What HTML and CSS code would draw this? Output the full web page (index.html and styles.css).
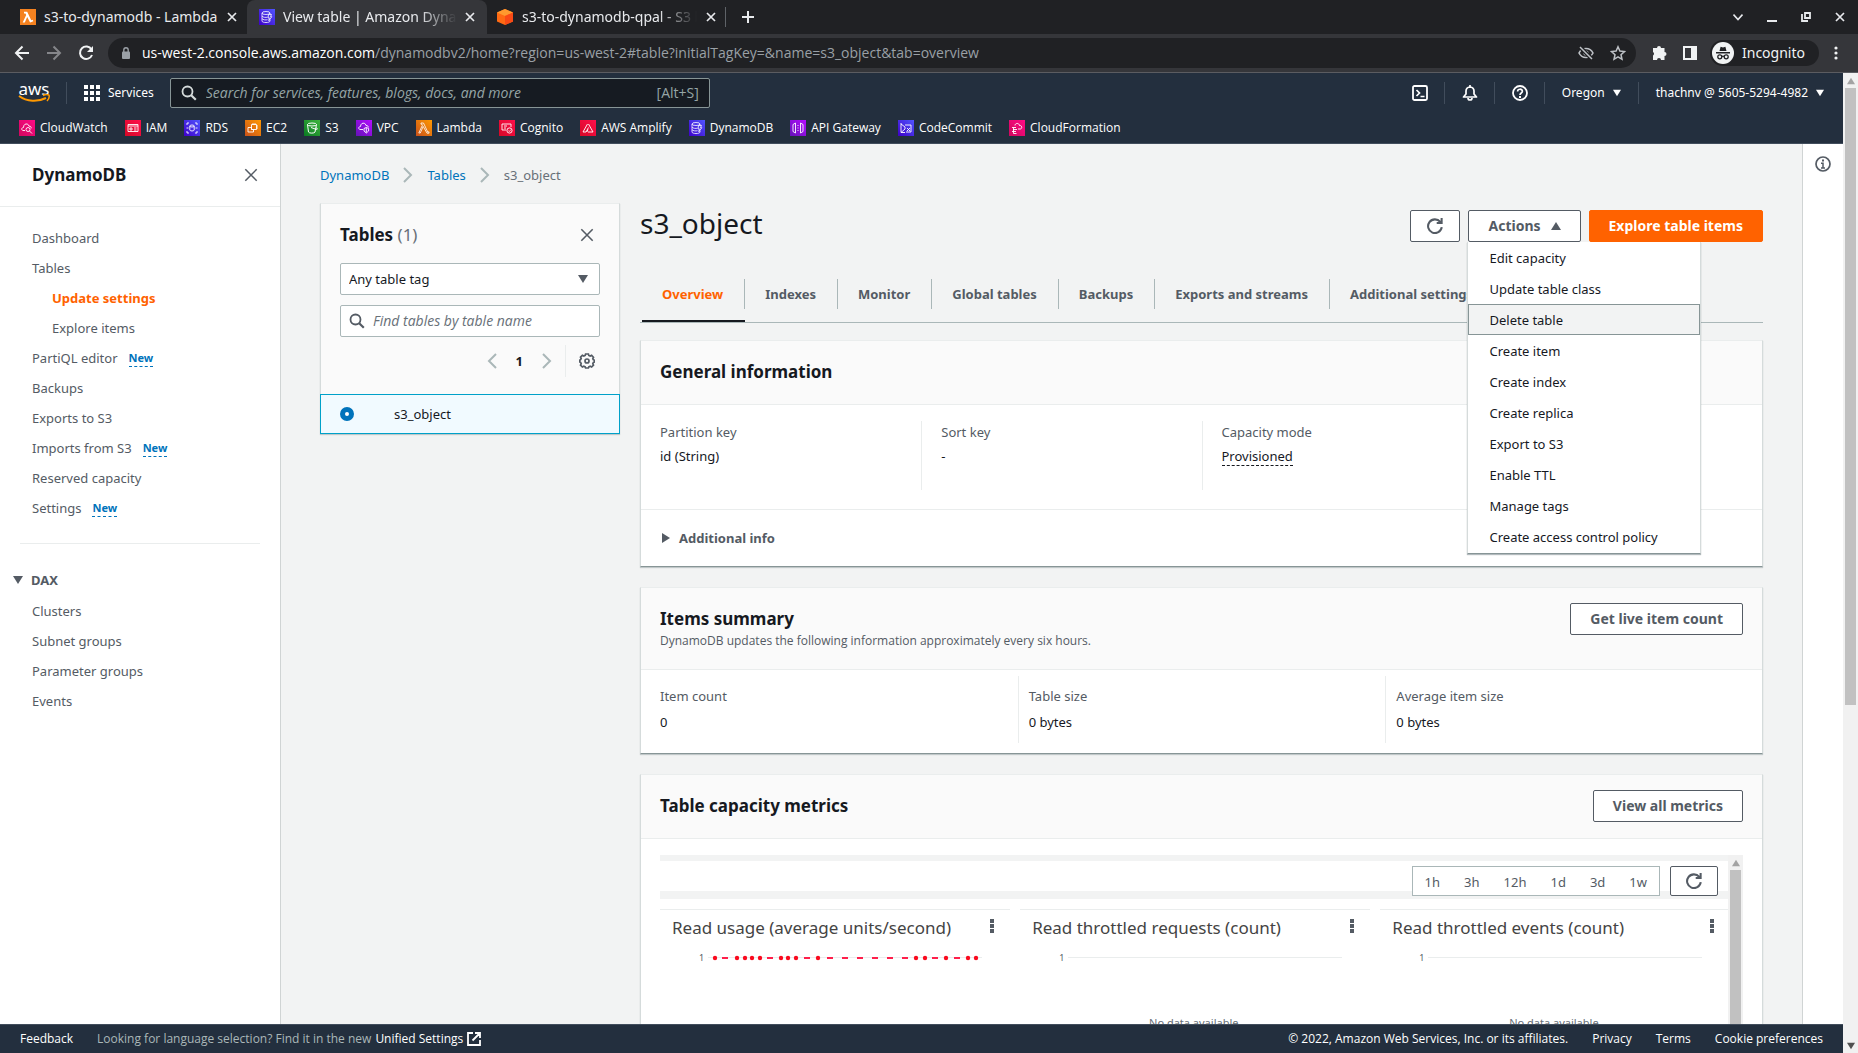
FILE: index.html
```html
<!DOCTYPE html>
<html lang="en">
<head>
<meta charset="utf-8">
<title>View table | Amazon DynamoDB</title>
<link rel="stylesheet" href="styles.css">
</head>
<body>
<svg class="defs" aria-hidden="true">
  <defs>
    <linearGradient id="g-orange" x1="0" y1="1" x2="1" y2="0"><stop offset="0" stop-color="#c8511b"/><stop offset="1" stop-color="#ff9900"/></linearGradient>
    <linearGradient id="g-pink" x1="0" y1="1" x2="1" y2="0"><stop offset="0" stop-color="#d0085d"/><stop offset="1" stop-color="#ff0a86"/></linearGradient>
    <linearGradient id="g-red" x1="0" y1="1" x2="1" y2="0"><stop offset="0" stop-color="#d50826"/><stop offset="1" stop-color="#ff0f4b"/></linearGradient>
    <linearGradient id="g-blue" x1="0" y1="1" x2="1" y2="0"><stop offset="0" stop-color="#3e00c8"/><stop offset="1" stop-color="#5055ff"/></linearGradient>
    <linearGradient id="g-green" x1="0" y1="1" x2="1" y2="0"><stop offset="0" stop-color="#0a7a22"/><stop offset="1" stop-color="#3fb53f"/></linearGradient>
    <linearGradient id="g-purple" x1="0" y1="1" x2="1" y2="0"><stop offset="0" stop-color="#6412b8"/><stop offset="1" stop-color="#b50dff"/></linearGradient>
    <symbol id="i-lambda" viewBox="0 0 16 16"><rect width="16" height="16" fill="url(#g-orange)"/><path d="M5 3h2.500l4.300 9.200 1.200-.4v1.400h-2L7.200 6.400 4.300 13H2.800l3.600-7.800-.5-1H5z" fill="none" stroke="#fff" stroke-width=".8"/></symbol>
    <symbol id="i-dynamo" viewBox="0 0 16 16"><rect width="16" height="16" fill="url(#g-blue)"/><g fill="none" stroke="#fff" stroke-width=".8"><ellipse cx="7" cy="4" rx="4" ry="1.500"/><path d="M3 4v8c0 2 8 2 8 0v-1.500M3 7c.5 1.400 4 1.700 5.500 1.200M3 9.500c.5 1.400 4 1.700 5.500 1.200M11 4v1"/><path d="m9.500 5.500h3l-1 2.200h1.300l-3 4 .6-2.800H9z"/></g></symbol>
    <symbol id="i-refresh" viewBox="1 1 14 14"><path d="M12.600 4.400A6 6 0 1 0 13.900 9M13.800 1v4.400H9.500" fill="none" stroke="currentColor" stroke-width="1.800"/></symbol>
    <symbol id="i-close" viewBox="0 0 16 16"><path d="m1.500 1.500 13 13M14.500 1.500l-13 13" fill="none" stroke="currentColor" stroke-width="1.800"/></symbol>
    <symbol id="i-x" viewBox="0 0 10 10"><path d="m1 1 8 8m0-8-8 8" fill="none" stroke="currentColor" stroke-width="1.700"/></symbol>
    <symbol id="i-search" viewBox="0 0 16 16"><path d="m10.200 10.200 4.600 4.600" stroke="currentColor" stroke-width="2.200"/><circle cx="6.500" cy="6.500" r="5" fill="none" stroke="currentColor" stroke-width="1.800"/></symbol>
    <symbol id="i-down" viewBox="0 0 10 10"><path d="M0 1h10L5 9z" fill="currentColor"/></symbol>
    <symbol id="i-up" viewBox="0 0 10 10"><path d="M0 9h10L5 1z" fill="currentColor"/></symbol>
    <symbol id="i-right" viewBox="0 0 10 16"><path d="m1 1 7 7-7 7" fill="none" stroke="currentColor" stroke-width="2"/></symbol>
    <symbol id="i-left" viewBox="0 0 10 16"><path d="M9 1 2 8l7 7" fill="none" stroke="currentColor" stroke-width="2"/></symbol>
    <symbol id="i-kebab" viewBox="0 0 4 14"><path d="M0 0h4v4H0zM0 5h4v4H0zM0 10h4v4H0z" fill="currentColor"/></symbol>
  </defs>
</svg>

<div class="browser">
  <div class="tabstrip">
    <div class="tab">
      <svg class="ic16" viewBox="0 0 16 16"><rect width="16" height="16" fill="#f58220"/><path d="M4 2.800h3.200l4 8.400 1.500-.5.600 1.600-3.200 1.200L7.200 8l-2.400 5.400H2.700l3.500-7.500-.7-1.400H4z" fill="#fff"/></svg>
      <span class="tab-title">s3-to-dynamodb - Lambda</span>
      <button class="icon-btn" aria-label="Close tab"><svg class="ic10"><use href="#i-x"/></svg></button>
    </div>
    <div class="tab tab-active">
      <svg class="ic16"><use href="#i-dynamo"/></svg>
      <span class="tab-title fade">View table | Amazon DynamoDB</span>
      <button class="icon-btn" aria-label="Close tab"><svg class="ic10"><use href="#i-x"/></svg></button>
    </div>
    <div class="tab tab-last">
      <svg class="ic16" viewBox="0 0 16 16"><path d="m8 0 8 3.500v9L8 16l-8-3.500v-9z" fill="#ff6a13"/><path d="m8 0 8 3.500L8 7 0 3.500z" fill="#ff9a2e"/><path d="m8 7 8-3.500v9L8 16z" fill="#f94a16"/></svg>
      <span class="tab-title fade">s3-to-dynamodb-qpal - S3 bucket</span>
      <button class="icon-btn" aria-label="Close tab"><svg class="ic10"><use href="#i-x"/></svg></button>
    </div>
    <button class="icon-btn new-tab" aria-label="New tab"><svg class="ic12" viewBox="0 0 12 12"><path d="M6 0v12M0 6h12" stroke="currentColor" stroke-width="2"/></svg></button>
    <div class="window-controls">
      <button class="icon-btn" aria-label="Search tabs"><svg class="ic10" viewBox="0 0 10 10"><path d="m.5 2.500 4.500 5 4.500-5" fill="none" stroke="currentColor" stroke-width="1.600"/></svg></button>
      <button class="icon-btn" aria-label="Minimize"><svg class="ic10" viewBox="0 0 10 10"><path d="M0 9h10" stroke="currentColor" stroke-width="2"/></svg></button>
      <button class="icon-btn" aria-label="Restore"><svg class="ic10" viewBox="0 0 10 10"><path d="M4 1h5v5H4zM1 2v7h6" fill="none" stroke="currentColor" stroke-width="1.800"/></svg></button>
      <button class="icon-btn" aria-label="Close window"><svg class="ic10"><use href="#i-x"/></svg></button>
    </div>
  </div>
  <div class="toolbar">
    <button class="icon-btn" aria-label="Back"><svg class="ic16" viewBox="0 0 16 16"><path d="M15 8H2m6.500-6.500L2 8l6.500 6.500" fill="none" stroke="currentColor" stroke-width="2"/></svg></button>
    <button class="icon-btn dim" aria-label="Forward"><svg class="ic16" viewBox="0 0 16 16"><path d="M1 8h13M7.500 1.500 14 8l-6.500 6.500" fill="none" stroke="currentColor" stroke-width="2"/></svg></button>
    <button class="icon-btn" aria-label="Reload"><svg class="ic16" viewBox="0 0 16 16"><path d="M13.500 4.500A6.200 6.200 0 1 0 14 10" fill="none" stroke="currentColor" stroke-width="2"/><path d="M15 1v6H9z" fill="currentColor"/></svg></button>
    <div class="omnibox">
      <svg class="lock" viewBox="0 0 10 12"><path d="M2.800 5V3a2.200 2.200 0 0 1 4.400 0v2" fill="none" stroke="#9aa0a6" stroke-width="1.400"/><rect x="1" y="4.500" width="8" height="7.500" rx="1" fill="#9aa0a6"/></svg>
      <span class="url"><b>us-west-2.console.aws.amazon.com</b>/dynamodbv2/home?region=us-west-2#table?initialTagKey=&amp;name=s3_object&amp;tab=overview</span>
      <svg class="ic16" viewBox="0 0 16 16"><path d="M1 8c3-6 11-6 14 0-3 6-11 6-14 0z" fill="none" stroke="#bdc1c6" stroke-width="1.600"/><circle cx="8" cy="8" r="2.600" fill="#bdc1c6"/><path d="m2 2 12 12" stroke="#202124" stroke-width="4"/><path d="m2 2 12 12" stroke="#bdc1c6" stroke-width="1.500"/></svg>
      <svg class="ic16" viewBox="0 0 16 16"><path d="m8 1.800 1.900 4.300 4.600.5-3.500 3.100 1 4.600L8 11.900l-4 2.400 1-4.600-3.500-3.100 4.600-.5z" fill="none" stroke="#bdc1c6" stroke-width="1.500"/></svg>
    </div>
    <div class="toolbar-right">
      <button class="icon-btn" aria-label="Extensions"><svg class="ic16" viewBox="0 0 16 16"><path d="M5 3a2 2 0 0 1 4 0h3.500v4a2 2 0 0 1 0 4v4H9a2 2 0 0 0-4 0H1v-4.500a2 2 0 0 0 0-3.500V3z" fill="currentColor"/></svg></button>
      <button class="icon-btn" aria-label="Side panel"><svg class="ic14" viewBox="0 0 14 14"><path d="M1 1h12v12H1z" fill="none" stroke="currentColor" stroke-width="2"/><path d="M8 1h5v12H8z" fill="currentColor"/></svg></button>
      <div class="incognito">
        <svg class="ic22" viewBox="0 0 22 22"><circle cx="11" cy="11" r="11" fill="#f1f3f4"/><path d="M7.500 9 8.600 4.800l2.400.6 2.400-.6L14.500 9zM4 10h14v1.400H4z" fill="#202124"/><g fill="none" stroke="#202124" stroke-width="1.300"><circle cx="7.800" cy="14.800" r="2"/><circle cx="14.200" cy="14.800" r="2"/><path d="M9.800 14.500q1.200-.8 2.400 0"/></g></svg>
        <span>Incognito</span>
      </div>
      <button class="icon-btn" aria-label="Browser menu"><svg class="menu-dots" viewBox="0 0 4 14"><g fill="currentColor"><circle cx="2" cy="2" r="1.600"/><circle cx="2" cy="7" r="1.600"/><circle cx="2" cy="12" r="1.600"/></g></svg></button>
    </div>
  </div>
</div>

<div class="page">
  <div class="console">
    <header class="aws-header">
      <div class="header-main">
        <a href="#" class="aws-logo" aria-label="AWS home"><span>aws</span><svg viewBox="0 0 32 9"><path d="M1 2c8 6 19 6 27 2" fill="none" stroke="#f90" stroke-width="2"/><path d="M25 1.500c2-1 5-1 6-.3.500 1.500-.5 4.300-2 5.800" fill="none" stroke="#f90" stroke-width="1.500"/></svg></a>
        <button class="services"><svg class="ic16" viewBox="0 0 16 16"><path d="M0 0h4v4H0zM6 0h4v4H6zM12 0h4v4h-4zM0 6h4v4H0zM6 6h4v4H6zM12 6h4v4h-4zM0 12h4v4H0zM6 12h4v4H6zM12 12h4v4h-4z" fill="#fff"/></svg>Services</button>
        <label class="global-search"><svg class="ic16"><use href="#i-search"/></svg><input type="search" aria-label="Search AWS" placeholder="Search for services, features, blogs, docs, and more"><span>[Alt+S]</span></label>
        <nav class="header-nav">
          <button class="nav-icon" aria-label="CloudShell"><svg class="ic16" viewBox="0 0 16 16"><rect x="1" y="1" width="14" height="14" rx="1.500" fill="none" stroke="#fff" stroke-width="1.800"/><path d="m4.500 5 3 3-3 3M8.500 11.500h4" fill="none" stroke="#fff" stroke-width="1.700"/></svg></button>
          <button class="nav-icon" aria-label="Notifications"><svg class="ic16" viewBox="0 0 16 16"><path d="M1.500 12h13L12 9V6q0-3.500-4-4-4 .5-4 4v3z" fill="none" stroke="#fff" stroke-width="1.700" stroke-linejoin="round"/><path d="M8 0v2M6 13q0 2 2 2t2-2" fill="none" stroke="#fff" stroke-width="1.700"/></svg></button>
          <button class="nav-icon" aria-label="Help"><svg class="ic16" viewBox="0 0 16 16"><circle cx="8" cy="8" r="7" fill="none" stroke="#fff" stroke-width="1.800"/><path d="M5.600 6.500c0-3 4.800-3 4.800-.2C10.400 8 8 8 8 10" fill="none" stroke="#fff" stroke-width="1.700"/><path d="M7 11h2v2H7z" fill="#fff"/></svg></button>
          <button>Oregon<svg class="ic8"><use href="#i-down"/></svg></button>
          <button>thachnv @ 5605-5294-4982<svg class="ic8"><use href="#i-down"/></svg></button>
        </nav>
      </div>
      <nav class="favorites">
        <a href="#"><svg class="ic16" viewBox="0 0 16 16"><rect width="16" height="16" fill="url(#g-pink)"/><g fill="none" stroke="#fff" stroke-width=".9"><path d="M6 10.500H4c-2-.5-1.500-3 .5-3C4.500 3 9.500 3 10 6.200c2-.2 2.500 1.300 2 2.300"/><circle cx="9" cy="9.500" r="2"/><path d="m10.500 11 2.500 2.500"/></g></svg>CloudWatch</a>
        <a href="#"><svg class="ic16" viewBox="0 0 16 16"><rect width="16" height="16" fill="url(#g-red)"/><path d="M3 4.500h10v7H3zM3 6h10M5 8h2v2H5zM9 8h2.500M9 10h2.500" fill="none" stroke="#fff" stroke-width=".9"/></svg>IAM</a>
        <a href="#"><svg class="ic16" viewBox="0 0 16 16"><rect width="16" height="16" fill="url(#g-blue)"/><g fill="none" stroke="#fff" stroke-width=".9"><ellipse cx="8" cy="6" rx="2.200" ry="1"/><path d="M5.800 6v4c0 1.300 4.400 1.300 4.400 0V6M3 5V3h2M11 3h2v2M13 11v2h-2M5 13H3v-2M2.500 8H4.500M11.500 8h2"/></g></svg>RDS</a>
        <a href="#"><svg class="ic16" viewBox="0 0 16 16"><rect width="16" height="16" fill="url(#g-orange)"/><path d="M6.500 4.500h5v5h-5zM4 7.500h2.500V9.500H8.500V12H3V7.500zM8 4.500V3M10 4.500V3M11.500 6H13M11.500 8H13" fill="none" stroke="#fff" stroke-width=".9"/></svg>EC2</a>
        <a href="#"><svg class="ic16" viewBox="0 0 16 16"><rect width="16" height="16" fill="url(#g-green)"/><g fill="none" stroke="#fff"><ellipse cx="8" cy="4.500" rx="4.500" ry="1.500"/><path d="m3.500 4.500 1 7.500c.5 1.500 6 1.500 6.500 0l1.500-7.500M7 7.500l5.500 2c1.500 0 .5-1.500-.5-2"/></g></svg>S3</a>
        <a href="#"><svg class="ic16" viewBox="0 0 16 16"><rect width="16" height="16" fill="url(#g-purple)"/><path d="M7 9.500H4c-2-.5-1.500-3 .5-3C4.500 2.500 9.500 2 10 5.500c1.800 0 2.500 1 2.300 2M8 8.500l2.300-1 2.300 1v2.500l-2.300 2L8 11zM10.300 7.500v5" fill="none" stroke="#fff" stroke-width=".9"/></svg>VPC</a>
        <a href="#"><svg class="ic16"><use href="#i-lambda"/></svg>Lambda</a>
        <a href="#"><svg class="ic16" viewBox="0 0 16 16"><rect width="16" height="16" fill="url(#g-red)"/><path d="M3 4h9v3M3 4v6h4M5 6h3M5 8h2" fill="none" stroke="#fff" stroke-width=".9"/><circle cx="10.500" cy="10.500" r="2.600" fill="none" stroke="#fff" stroke-width=".9"/><path d="m9.300 10.500 1 1 1.600-1.800" fill="none" stroke="#fff" stroke-width=".8"/></svg>Cognito</a>
        <a href="#"><svg class="ic16" viewBox="0 0 16 16"><rect width="16" height="16" fill="url(#g-red)"/><path d="M7.500 4 3 12h3L8.500 7.500M8.500 4 13 12H8M8 9.500 6.800 12" fill="none" stroke="#fff" stroke-width=".9"/></svg>AWS Amplify</a>
        <a href="#"><svg class="ic16"><use href="#i-dynamo"/></svg>DynamoDB</a>
        <a href="#"><svg class="ic16" viewBox="0 0 16 16"><rect width="16" height="16" fill="url(#g-purple)"/><path d="M3 4.500 5.500 3v10L3 11.500zM13 4.500 10.500 3v10l2.500-1.500zM8 5v1M8 7.500v1M8 10v1" fill="none" stroke="#fff" stroke-width=".9"/></svg>API Gateway</a>
        <a href="#"><svg class="ic16" viewBox="0 0 16 16"><rect width="16" height="16" fill="url(#g-blue)"/><path d="M3 3v9.500M3 4l4 3v2l-4 3.500M7 5h6v7H8M9 8l3 3M12 8l-3 3M3 12.500h4" fill="none" stroke="#fff" stroke-width=".9"/></svg>CodeCommit</a>
        <a href="#"><svg class="ic16" viewBox="0 0 16 16"><rect width="16" height="16" fill="url(#g-pink)"/><path d="M6 5.500C6 3 10 2.500 10.500 5.500 13 5 13.500 8.500 11.500 9H9M3 7.500h4M4 9.500h4M3 11.500h4M4.500 7.500v6h3" fill="none" stroke="#fff" stroke-width=".9"/></svg>CloudFormation</a>
      </nav>
    </header>

    <div class="workspace">
      <aside class="sidebar">
        <div class="sidebar-head"><h2>DynamoDB</h2><button class="icon-btn" aria-label="Close navigation"><svg class="ic14"><use href="#i-close"/></svg></button></div>
        <ul class="side-list">
          <li><a href="#">Dashboard</a></li>
          <li><a href="#">Tables</a></li>
          <li class="sub"><a href="#" class="current">Update settings</a></li>
          <li class="sub"><a href="#">Explore items</a></li>
          <li><a href="#">PartiQL editor</a><button class="new">New</button></li>
          <li><a href="#">Backups</a></li>
          <li><a href="#">Exports to S3</a></li>
          <li><a href="#">Imports from S3</a><button class="new">New</button></li>
          <li><a href="#">Reserved capacity</a></li>
          <li><a href="#">Settings</a><button class="new">New</button></li>
        </ul>
        <hr>
        <button class="side-group"><svg class="ic10"><use href="#i-down"/></svg>DAX</button>
        <ul class="side-list side-dax">
          <li><a href="#">Clusters</a></li>
          <li><a href="#">Subnet groups</a></li>
          <li><a href="#">Parameter groups</a></li>
          <li><a href="#">Events</a></li>
        </ul>
      </aside>

      <main class="content">
        <nav class="breadcrumb" aria-label="Breadcrumb"><a href="#">DynamoDB</a><svg class="chev"><use href="#i-right"/></svg><a href="#">Tables</a><svg class="chev"><use href="#i-right"/></svg><span>s3_object</span></nav>
        <div class="columns">
          <section class="card tables-panel">
            <div class="tables-head">
              <div class="row"><h2>Tables <span class="count">(1)</span></h2><button class="icon-btn" aria-label="Close tables panel"><svg class="ic14"><use href="#i-close"/></svg></button></div>
              <div class="field"><select aria-label="Table tag"><option>Any table tag</option></select><svg class="ic10"><use href="#i-down"/></svg></div>
              <label class="field"><svg class="ic16"><use href="#i-search"/></svg><input type="search" aria-label="Find tables" placeholder="Find tables by table name"></label>
              <div class="pager">
                <button class="icon-btn" aria-label="Previous page"><svg class="chev"><use href="#i-left"/></svg></button><b>1</b><button class="icon-btn" aria-label="Next page"><svg class="chev"><use href="#i-right"/></svg></button>
                <button class="icon-btn gear" aria-label="Preferences"><svg class="ic16" viewBox="0 0 16 16"><path d="M6.600 1h2.800l.4 1.500 1.400.6 1.400-.7 1.900 1.900-.7 1.400.6 1.200 1.100.3v1.800l-1.100.4-.6 1.400.7 1.300-1.900 1.900-1.400-.7-1.400.6-.4 1.100H6.600l-.4-1.100-1.400-.6-1.400.7-1.900-1.900.7-1.300-.6-1.400L.7 9V7.200l.9-.5.6-1.200-.7-1.300 1.900-1.900 1.400.7 1.400-.6z" fill="none" stroke="currentColor" stroke-width="1.700"/><circle cx="8" cy="8" r="2" fill="none" stroke="currentColor" stroke-width="1.700"/></svg></button>
              </div>
            </div>
            <label class="table-row"><input type="radio" name="table" checked><span>s3_object</span></label>
          </section>

          <div class="detail">
            <div class="title-row">
              <h1>s3_object</h1>
              <div class="actions">
                <button class="btn btn-icon" aria-label="Refresh"><svg class="ic16"><use href="#i-refresh"/></svg></button>
                <div class="dropdown">
                  <button class="btn" aria-expanded="true">Actions<svg class="ic10"><use href="#i-up"/></svg></button>
                  <ul class="menu">
                    <li><button>Edit capacity</button></li>
                    <li><button>Update table class</button></li>
                    <li><button class="hover">Delete table</button></li>
                    <li><button>Create item</button></li>
                    <li><button>Create index</button></li>
                    <li><button>Create replica</button></li>
                    <li><button>Export to S3</button></li>
                    <li><button>Enable TTL</button></li>
                    <li><button>Manage tags</button></li>
                    <li><button>Create access control policy</button></li>
                  </ul>
                </div>
                <button class="btn btn-primary">Explore table items</button>
              </div>
            </div>
            <div class="tabs" role="tablist">
              <button role="tab" aria-selected="true">Overview</button>
              <button role="tab">Indexes</button>
              <button role="tab">Monitor</button>
              <button role="tab">Global tables</button>
              <button role="tab">Backups</button>
              <button role="tab">Exports and streams</button>
              <button role="tab">Additional settings</button>
            </div>

            <section class="card">
              <div class="card-head"><h2>General information</h2></div>
              <dl class="facts facts-four">
                <div><dt>Partition key</dt><dd>id (String)</dd></div>
                <div><dt>Sort key</dt><dd>-</dd></div>
                <div><dt>Capacity mode</dt><dd><button class="popover">Provisioned</button></dd></div>
                <div></div>
              </dl>
              <button class="expander"><svg class="tri" viewBox="0 0 8 10"><path d="M0 0v10l8-5z" fill="currentColor"/></svg>Additional info</button>
            </section>

            <section class="card">
              <div class="card-head"><div><h2>Items summary</h2><p>DynamoDB updates the following information approximately every six hours.</p></div><button class="btn">Get live item count</button></div>
              <dl class="facts facts-three">
                <div><dt>Item count</dt><dd>0</dd></div>
                <div><dt>Table size</dt><dd>0 bytes</dd></div>
                <div><dt>Average item size</dt><dd>0 bytes</dd></div>
              </dl>
            </section>

            <section class="card metrics">
              <div class="card-head"><h2>Table capacity metrics</h2><button class="btn">View all metrics</button></div>
              <div class="frame">
                <div class="frame-body">
                  <div class="range-bar">
                    <div class="ranges"><button>1h</button><button>3h</button><button>12h</button><button>1d</button><button>3d</button><button>1w</button></div>
                    <button class="btn" aria-label="Refresh metrics"><svg class="ic16"><use href="#i-refresh"/></svg></button>
                  </div>
                  <div class="widgets">
                    <div class="widget">
                      <div class="widget-head"><h3>Read usage (average units/second)</h3><button class="icon-btn" aria-label="Widget actions"><svg class="kebab"><use href="#i-kebab"/></svg></button></div>
                      <div class="plot"><span>1</span><svg viewBox="0 0 274 8" preserveAspectRatio="none"><path d="M0 3.500h274" stroke="#eaeded"/><path d="M14 4h6M59 4h6M96 4h6M119 4h6M134 4h6M149 4h6M164 4h6M179 4h6M194 4h6M224 4h6M246 4h6" stroke="#ff1f4b" stroke-width="2"/><g fill="#fa0a1e"><circle cx="7" cy="4" r="2.200"/><circle cx="29" cy="4" r="2.200"/><circle cx="37" cy="4" r="2.200"/><circle cx="44" cy="4" r="2.200"/><circle cx="52" cy="4" r="2.200"/><circle cx="73" cy="4" r="2.200"/><circle cx="80" cy="4" r="2.200"/><circle cx="88" cy="4" r="2.200"/><circle cx="110" cy="4" r="2.200"/><circle cx="208" cy="4" r="2.200"/><circle cx="217" cy="4" r="2.200"/><circle cx="238" cy="4" r="2.200"/><circle cx="260" cy="4" r="2.200"/><circle cx="268" cy="4" r="2.200"/></g></svg></div>
                    </div>
                    <div class="widget">
                      <div class="widget-head"><h3>Read throttled requests (count)</h3><button class="icon-btn" aria-label="Widget actions"><svg class="kebab"><use href="#i-kebab"/></svg></button></div>
                      <div class="plot"><span>1</span><svg viewBox="0 0 274 8" preserveAspectRatio="none"><path d="M0 3.500h274" stroke="#eaeded"/></svg></div>
                      <p class="empty">No data available.</p>
                    </div>
                    <div class="widget">
                      <div class="widget-head"><h3>Read throttled events (count)</h3><button class="icon-btn" aria-label="Widget actions"><svg class="kebab"><use href="#i-kebab"/></svg></button></div>
                      <div class="plot"><span>1</span><svg viewBox="0 0 274 8" preserveAspectRatio="none"><path d="M0 3.500h274" stroke="#eaeded"/></svg></div>
                      <p class="empty">No data available.</p>
                    </div>
                  </div>
                </div>
                <div class="scrollbar"><svg class="ic8 arrow"><use href="#i-up"/></svg><div class="thumb"></div></div>
              </div>
            </section>
          </div>
        </div>
      </main>
      <aside class="tools"><button class="icon-btn" aria-label="Open help"><svg class="ic16" viewBox="0 0 16 16"><circle cx="8" cy="8" r="7" fill="none" stroke="currentColor" stroke-width="1.700"/><path d="M7 3.500h2v2H7z" fill="currentColor"/><path d="M6 7.300h2V12M6 12h4" fill="none" stroke="currentColor" stroke-width="1.500"/></svg></button></aside>
    </div>

    <footer class="footer">
      <a href="#">Feedback</a>
      <p>Looking for language selection? Find it in the new <a href="#">Unified Settings</a><svg class="ic14" viewBox="0 0 14 14"><path d="M6 1H1v12h12V8M8 1h5v5M13 1 5.500 8.500" fill="none" stroke="#fff" stroke-width="1.800"/></svg></p>
      <span class="legal">© 2022, Amazon Web Services, Inc. or its affiliates.</span>
      <a href="#">Privacy</a><a href="#">Terms</a><a href="#">Cookie preferences</a>
    </footer>
  </div>
  <div class="scrollbar page-scroll"><svg class="ic8 arrow"><use href="#i-up"/></svg><div class="thumb"></div><svg class="ic8 arrow arrow-end"><use href="#i-down"/></svg></div>
</div>
</body>
</html>
```
FILE: styles.css
```css
* { box-sizing: border-box; }
body {
  margin: 0;
  height: 100vh;
  display: flex;
  flex-direction: column;
  overflow: hidden;
  font: 13px/20px "Noto Sans", "Open Sans", sans-serif;
  color: #16191f;
}
h1, h2, h3, p, ul, dl, dd { margin: 0; padding: 0; }
ul { list-style: none; }
a { color: inherit; text-decoration: none; }
button, input, select { font: inherit; color: inherit; }
button { margin: 0; padding: 0; border: 0; background: none; white-space: nowrap; }
input, select { border: 0; outline: 0; background: none; padding: 0; margin: 0; appearance: none; }
svg { display: block; flex: none; }
.defs { position: absolute; width: 0; height: 0; }
.ic8 { width: 8px; height: 8px; }
.ic10 { width: 10px; height: 10px; }
.ic12 { width: 12px; height: 12px; }
.ic14 { width: 14px; height: 14px; }
.ic16 { width: 16px; height: 16px; }
.ic22 { width: 22px; height: 22px; }
.chev { width: 10px; height: 16px; }
.icon-btn { display: flex; align-items: center; justify-content: center; }

/* browser chrome */
.browser { flex: none; background: #35363a; color: #f1f3f4; border-bottom: 1px solid #5b5c61; font-size: 14px; }
.tabstrip { display: flex; height: 34px; background: #202124; color: #e8eaed; }
.tab { display: flex; align-items: center; gap: 8px; width: 247px; padding: 0 10px 0 20px; }
.tab-title { flex: 1; overflow: hidden; white-space: nowrap; }
.fade { mask-image: linear-gradient(90deg, #000 78%, transparent); }
.tab-active { width: 240px; padding: 0 12px; background: #35363a; border-radius: 8px 8px 0 0; }
.tab-last { width: 239px; padding: 0 0 0 10px; gap: 9px; }
.tab-last::after { content: ""; width: 1px; height: 20px; background: #5f6368; }
.new-tab { width: 44px; }
.window-controls { display: flex; gap: 24px; margin-left: auto; padding-right: 13px; }
.toolbar { display: flex; align-items: center; height: 38px; gap: 16px; padding-left: 14px; }
.dim { color: #85868a; }
.omnibox { flex: 1; display: flex; align-items: center; gap: 16px; height: 30px; margin-left: -2px; padding: 0 10px 0 13px; border-radius: 15px; background: #202124; color: #9aa0a6; }
.lock { width: 10px; height: 12px; }
.url { flex: 1; margin-left: -5px; font-family: "Open Sans", sans-serif; }
.url b { font-weight: 400; color: #fff; }
.toolbar-right { display: flex; align-items: center; gap: 15px; padding-right: 20px; }
.incognito { display: flex; align-items: center; gap: 8px; height: 26px; margin-left: -2px; padding: 0 14px 0 2px; border-radius: 13px; background: #202124; }
.menu-dots { width: 4px; height: 14px; }

/* page frame */
.page { flex: 1; min-height: 0; display: flex; }
.console { flex: 1; min-width: 0; display: flex; flex-direction: column; }
.scrollbar { width: 15px; flex: none; display: flex; flex-direction: column; align-items: center; background: #f1f1f1; color: #a3a3a3; }
.arrow { margin: 4px 0 3px; }
.thumb { width: 11px; flex: 1; background: #c1c1c1; }
.page-scroll .thumb { flex: none; height: 63%; }
.arrow-end { margin-top: auto; color: #505050; }

/* console header */
.aws-header { flex: none; background: #232f3e; color: #fff; border-bottom: 1px solid #414d5c; font-size: 12px; }
.header-main { display: flex; align-items: center; height: 40px; padding-left: 18px; }
.aws-logo { width: 32px; font-size: 17px; line-height: 11px; text-align: center; }
.aws-logo svg { width: 32px; height: 9px; }
.services { display: flex; align-items: center; gap: 8px; height: 22px; margin-left: 16px; padding: 0 16px 0 17px; border-left: 1px solid #414d5c; }
.global-search { display: flex; align-items: center; width: 540px; height: 30px; padding: 0 10px; border: 1px solid #879596; border-radius: 2px; background: #161b22; font-size: 14px; font-family: "Open Sans", sans-serif; color: #95a5a6; }
.global-search svg { color: #d5dbdb; }
.global-search input { flex: 1; margin-left: 9px; }
input::placeholder { color: inherit; font-style: italic; opacity: 1; }
.header-nav { display: flex; margin-left: auto; padding-right: 2px; }
.header-nav button { display: flex; align-items: center; gap: 8px; height: 22px; padding: 0 17px; border-left: 1px solid #414d5c; }
.header-nav .nav-icon { padding-right: 16px; }
.header-nav button:first-child { border: 0; }
.favorites { display: flex; gap: 17px; height: 30px; padding-left: 19px; align-items: center; font-family: "Open Sans", sans-serif; }
.favorites a { display: flex; gap: 5px; align-items: center; white-space: nowrap; }

/* layout */
.workspace { flex: 1; min-height: 0; display: flex; overflow: hidden; background: #f2f3f3; }
.sidebar { width: 281px; flex: none; background: #fff; border-right: 1px solid #d0d4d4; color: #545b64; }
.sidebar-head { display: flex; justify-content: space-between; align-items: center; height: 63px; padding: 0 22px 0 32px; border-bottom: 1px solid #eaeded; }
h2 { font-size: 17px; line-height: 22px; color: #16191f; font-weight: 700; }
.side-list { padding: 16px 32px 0; }
.side-list li { display: flex; align-items: center; gap: 11px; height: 30px; }
.side-list .sub { padding-left: 20px; }
.current { color: #ff6200; font-weight: 700; }
.new { color: #0073bb; font-size: 11px; font-weight: 700; line-height: 17px; border-bottom: 1px dashed #0073bb; }
.sidebar hr { margin: 20px 20px 26px; border: 0; border-top: 1px solid #eaeded; }
.side-group { display: flex; align-items: center; gap: 8px; padding-left: 13px; font-weight: 700; }
.side-dax { padding-top: 6px; }
.tools { width: 41px; flex: none; background: #fff; border-left: 1px solid #d0d4d4; color: #545b64; padding: 12px 0 0 12px; }

.content { flex: 1; min-width: 0; padding: 21px 39px 0; }
.breadcrumb { display: flex; align-items: center; gap: 14px; height: 20px; color: #687078; }
.breadcrumb a { color: #0073bb; }
.breadcrumb svg, .pager .chev { color: #aab7b8; }
.columns { display: flex; align-items: flex-start; gap: 20px; margin-top: 18px; }
.card { background: #fff; border: 1px solid #d5dbdb; border-top-color: #eaeded; border-bottom-color: #879596; box-shadow: 0 1px 1px rgba(0, 28, 36, .2); }
.tables-panel { width: 300px; flex: none; border-bottom: 0; }
.tables-head { padding: 20px 19px 0; background: #fafafa; height: 190px; }
.row { display: flex; align-items: center; justify-content: space-between; height: 22px; padding-right: 6px; margin-bottom: 17px; }
.row .icon-btn, .sidebar-head .icon-btn { color: #545b64; }
.count { font-weight: 400; color: #687078; }
.field { display: flex; align-items: center; gap: 8px; height: 32px; margin-bottom: 10px; padding: 0 11px 0 8px; border: 1px solid #aab7b8; border-radius: 2px; background: #fff; color: #16191f; }
.field select, .field input { flex: 1; min-width: 0; }
.field svg { color: #545b64; }
.field input { color: #687078; }
.field input::placeholder { font-family: "Open Sans", sans-serif; font-size: 14px; }
.pager { display: flex; align-items: center; justify-content: flex-end; gap: 19px; height: 32px; margin-top: -2px; padding-right: 5px; color: #16191f; }
.gear { height: 32px; margin-left: -6px; padding-left: 13px; border-left: 1px solid #eaeded; color: #545b64; }
.table-row { display: flex; align-items: center; gap: 40px; height: 40px; margin: 0 -1px; padding-left: 19px; border: 1px solid #00a1c9; background: #f1faff; }
.table-row input { width: 14px; height: 14px; border: 5px solid #0073bb; border-radius: 50%; background: #fff; }

.detail { flex: 1; min-width: 0; display: flex; flex-direction: column; gap: 20px; }
.title-row { display: flex; justify-content: space-between; margin-bottom: -20px; height: 76px; }
h1 { font-size: 28px; line-height: 40px; font-weight: 400; }
.actions { display: flex; gap: 8px; padding-top: 7px; }
.btn { display: flex; align-items: center; justify-content: center; gap: 10px; height: 32px; padding: 0 19px; border: 1px solid #545b64; border-radius: 2px; background: #fff; color: #545b64; font-size: 14px; font-weight: 700; }
.btn-icon { width: 50px; padding: 0; }
.btn-primary { background: #ff6200; border-color: #ff6200; color: #fff; }
.dropdown { position: relative; }
.menu { position: absolute; z-index: 2; top: 32px; left: -1px; width: 234px; padding-bottom: 1px; background: #fff; border: 1px solid #d5dbdb; border-top: 0; border-bottom-color: #879596; box-shadow: 0 1px 1px rgba(0, 28, 36, .3); }
.menu button { display: block; width: 100%; height: 31px; padding: 0 20px; text-align: left; border: 1px solid transparent; }
.menu .hover { background: #f2f3f3; border-color: #879596; }
.tabs { display: flex; height: 44px; padding-left: 2px; border-bottom: 1px solid #aab7b8; color: #545b64; overflow: hidden; margin-bottom: -3px; }
.tabs button { display: flex; align-items: flex-start; font-weight: 700; line-height: 30px; border-bottom: 2px solid transparent; }
.tabs button::before, .tabs button::after { content: ""; width: 20px; }
.tabs button::after { width: 21px; height: 30px; border-right: 1px solid #aab7b8; }
.tabs [aria-selected] { color: #ff6200; border-bottom-color: #16191f; }

.card-head { display: flex; justify-content: space-between; align-items: flex-start; padding: 15px 19px 16px; background: #fafafa; border-bottom: 1px solid #eaeded; }
.card-head h2 { line-height: 32px; }
.card-head p { font-family: "Open Sans", sans-serif; font-size: 12px; line-height: 16px; color: #545b64; margin: -2px 0 4px; }
.facts { display: grid; }
.facts dt { color: #545b64; }
.facts > div { border-left: 1px solid #eaeded; }
.facts > div:first-child { border: 0; }
.facts-four { grid-template-columns: repeat(4, 1fr); padding: 16px 0 19px; border-bottom: 1px solid #eaeded; }
.facts-four > div { height: 69px; padding: 1px 19px 0; }
.facts-four dd { margin-top: 4px; }
.popover { line-height: 17px; border-bottom: 1px dashed #16191f; }
.facts-three { grid-template-columns: repeat(3, 1fr); padding: 6px 9px 10px; }
.facts-three > div { height: 67px; padding: 10px 10px 0; }
.facts-three dd { margin-top: 6px; }
.expander { display: flex; align-items: center; gap: 9px; height: 56px; padding-left: 21px; color: #545b64; font-weight: 700; }
.tri { width: 8px; height: 10px; }

.frame { display: flex; height: 300px; margin: 16px 19px; }
.frame-body { flex: 1; min-width: 0; }
.range-bar { display: flex; justify-content: flex-end; gap: 10px; height: 44px; padding: 11px 10px 0; background: linear-gradient(#f2f3f3 6px, #fff 6px 36px, #f2f3f3 36px); }
.ranges { display: flex; gap: 24px; height: 30px; padding: 0 12px; background: #fff; border: 1px solid #aab7b8; color: #545b64; line-height: 30px; }
.range-bar .btn { width: 48px; height: 30px; padding: 0; }
.widgets { display: grid; grid-template-columns: repeat(3, 1fr); gap: 10px; margin-top: 10px; }
.widget { border-top: 1px solid #eaeded; }
.widget-head { display: flex; justify-content: space-between; align-items: flex-start; padding: 7px 16px 0 12px; }
.widget-head .icon-btn { padding-top: 2px; }
h3 { font-size: 17px; line-height: 22px; font-weight: 400; color: #444; }
.kebab { width: 4px; height: 14px; color: #545b64; }
.plot { display: flex; align-items: center; gap: 4px; padding: 14px 28px 0 39px; font-size: 9px; line-height: 10px; color: #545b64; }
.plot svg { flex: 1; min-width: 0; height: 8px; }
.empty { margin-top: 50px; text-align: center; font-size: 11px; color: #687078; }

.footer { flex: none; display: flex; align-items: center; gap: 24px; height: 29px; padding: 0 20px; background: #232f3e; color: #fff; font-family: "Open Sans", sans-serif; font-size: 12px; border-top: 1px solid #414d5c; z-index: 1; }
.footer p { display: flex; gap: 4px; align-items: center; color: #aab7b8; }
.footer p a { color: #fff; }
.legal { margin-left: auto; }
```
